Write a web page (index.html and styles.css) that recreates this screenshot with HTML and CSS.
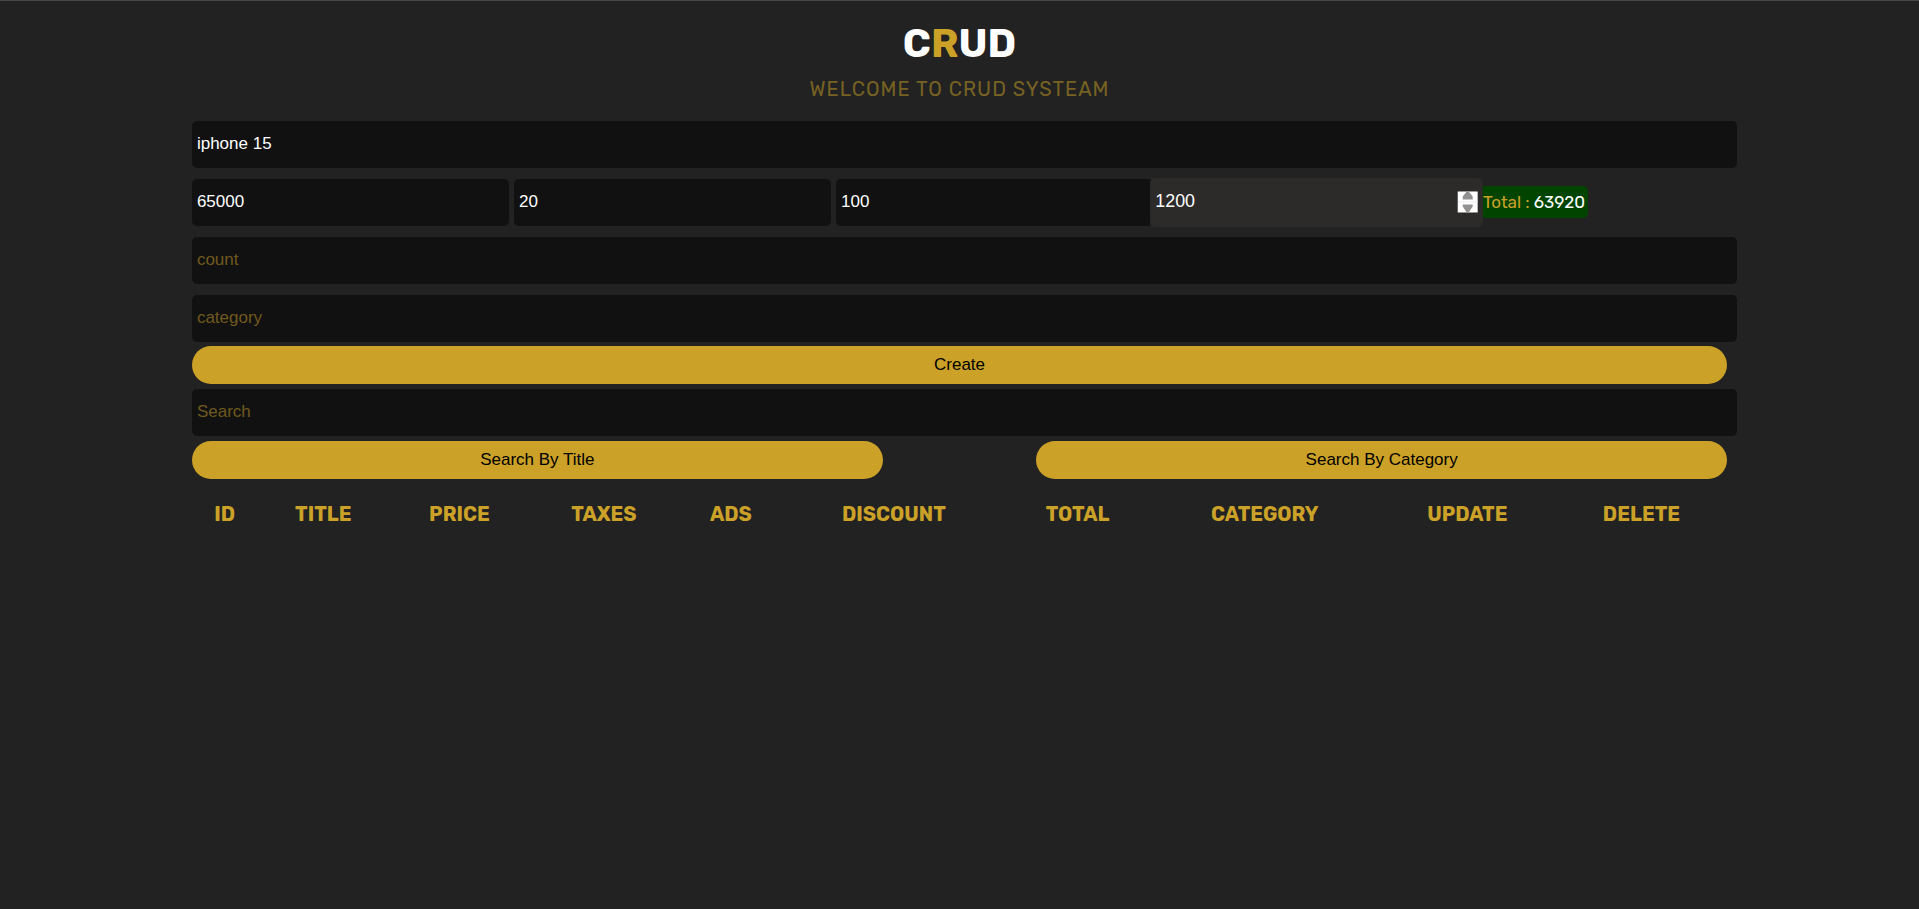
FILE: index.html
```html
<!DOCTYPE html>
<html lang="en">
<head>
<meta charset="utf-8">
<meta name="viewport" content="width=device-width, initial-scale=1">
<title>CRUD</title>
<link rel="stylesheet" href="styles.css">
</head>
<body>
<main class="crud">
  <header class="head">
    <h1 class="logo">C<span class="accent">R</span>UD</h1>
    <p class="tagline">WELCOME TO CRUD SYSTEAM</p>
  </header>
  <form class="inputs">
    <input class="field wide" type="text" aria-label="title" placeholder="title" value="iphone 15">
    <div class="price">
      <input class="field" type="number" aria-label="price" placeholder="price" value="65000">
      <input class="field" type="number" aria-label="taxes" placeholder="taxes" value="20">
      <input class="field" type="number" aria-label="ads" placeholder="ads" value="100">
      <input class="field active" type="number" aria-label="discount" placeholder="discount" value="1200">
      <output class="total">Total : <span class="amount">63920</span></output>
    </div>
    <input class="field wide" type="number" aria-label="count" placeholder="count">
    <input class="field wide" type="text" aria-label="category" placeholder="category">
  </form>
  <section class="actions">
    <button class="btn" type="button">Create</button>
    <input class="field wide" type="text" aria-label="Search" placeholder="Search">
    <div class="search-buttons">
      <button class="btn" type="button">Search By Title</button>
      <button class="btn" type="button">Search By Category</button>
    </div>
  </section>
  <table class="products">
    <thead>
      <tr>
        <th>ID</th><th>TITLE</th><th>PRICE</th><th>TAXES</th><th>ADS</th>
        <th>DISCOUNT</th><th>TOTAL</th><th>CATEGORY</th><th>UPDATE</th><th>DELETE</th>
      </tr>
    </thead>
    <tbody></tbody>
  </table>
</main>
</body>
</html>
```
FILE: styles.css
```css
* {
  box-sizing: border-box;
}

body {
  margin: 0;
  min-height: 100vh;
  border-top: 1px solid #444746;
  background: #222;
  color: #fff;
  font-family: Rubik, Roboto, sans-serif;
}

.crud {
  width: 80%;
  margin: 0 auto;
}

.head {
  padding-top: 19px;
  text-align: center;
}

.logo {
  margin: 0;
  font-size: 40px;
  line-height: 48px;
  font-weight: 700;
}

.accent {
  color: #cba128;
}

.tagline {
  margin: 0 0 20px;
  padding-top: 9px;
  color: #776223;
  font-size: 20px;
  line-height: 24px;
  letter-spacing: 1px;
}

.inputs {
  display: grid;
  gap: 11px;
}

.field {
  height: 47px;
  padding: 0 5px 1px;
  border: 0;
  border-radius: 5px;
  outline: 0;
  background: #111;
  color: #fff;
  font: 17px "Liberation Sans", Arial, sans-serif;
}

.field::placeholder {
  color: #70591d;
  opacity: 1;
}

.wide {
  width: calc(100% + 10px);
}

.price {
  display: flex;
  align-items: center;
  gap: 5px;
}

.price .field {
  width: calc(20% + 10px);
}

.active {
  position: relative;
  z-index: 1;
  background: #2d2b29;
  transform: scale(1.05);
}

.active::-webkit-inner-spin-button {
  appearance: none;
  width: 19px;
  height: 20px;
  opacity: 1;
  background: #fff url("data:image/svg+xml,%3Csvg xmlns='http://www.w3.org/2000/svg' viewBox='0 0 20 21'%3E%3Cpath fill='%23eee' d='M0 10h20v1H0z'/%3E%3Cpath fill='%23919191' d='M9 0h2l4 5v3H5V5zM5 13h10v2l-4 6H9l-4-6z'/%3E%3C/svg%3E") center / 100% 100%;
}

.total {
  margin-bottom: 2px;
  padding: 6px 3px;
  border-radius: 5px;
  background: #004400;
  color: #cba128;
  font-size: 17px;
  line-height: 20px;
}

.amount {
  color: #fff;
}

.actions {
  display: grid;
  gap: 5px;
  margin-top: 4px;
}

.btn {
  height: 38px;
  padding: 0 5px;
  border: 0;
  border-radius: 20px;
  background: #cba128;
  color: #000;
  font: 17px "Liberation Sans", Arial, sans-serif;
}

.search-buttons {
  display: flex;
  justify-content: space-between;
}

.search-buttons .btn {
  width: 45%;
}

.products {
  width: 100%;
  margin-top: 19px;
  border-collapse: collapse;
}

.products th {
  padding: 4px 7px;
  color: #cba128;
  font-size: 20px;
  line-height: 24px;
  font-weight: 700;
}
```
